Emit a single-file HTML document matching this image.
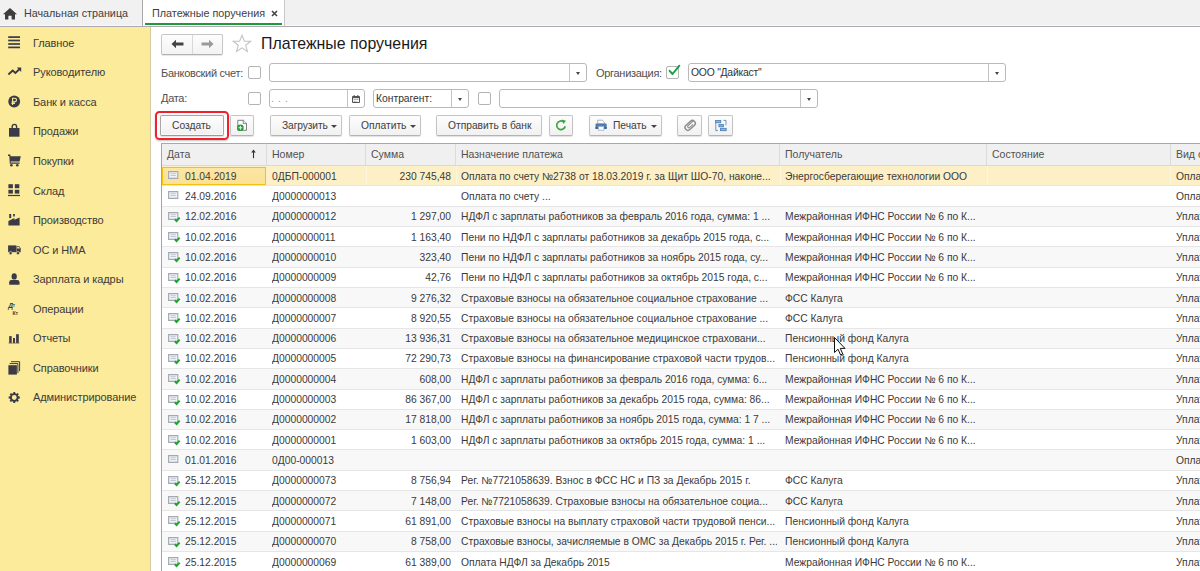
<!DOCTYPE html><html><head><meta charset="utf-8"><style>
*{margin:0;padding:0;box-sizing:border-box}
html,body{width:1200px;height:571px;overflow:hidden;background:#fff}
body{font-family:"Liberation Sans", sans-serif;position:relative;color:#333}
.a{position:absolute;white-space:nowrap}
#top{left:0;top:0;width:1200px;height:27px;background:#f1f1f1;border-bottom:1px solid #aea8b2;box-shadow:inset 0 -1px 0 #fafafa}
#side{left:0;top:27px;width:151px;height:544px;background:#fbeb9b;border-right:1px solid #d4cba2}
.sit{left:33px;font-size:11px;color:#3c3c3c;letter-spacing:-0.1px}
.lbl{font-size:11px;letter-spacing:-0.3px;color:#505050}
.cb{position:absolute;width:13px;height:13px;border:1px solid #b4b4b4;border-radius:2px;background:#fff}
.inp{position:absolute;border:1px solid #b9b9b9;border-radius:3px;background:#fff;height:19px}
.dd{position:absolute;top:0;right:0;width:17px;height:17px;border-left:1px solid #c4c4c4}
.dd:after{content:"";position:absolute;left:5.5px;top:8px;border-left:2.5px solid transparent;border-right:2.5px solid transparent;border-top:3px solid #444}
.btn{position:absolute;top:115px;height:21px;border:1px solid #c4c4c4;border-bottom-color:#b4b4b4;border-radius:2px;background:linear-gradient(#fdfdfd,#f1f1f1);box-shadow:0 1px 1px rgba(0,0,0,.12);font-size:10.25px;color:#404040;text-align:left;padding-left:11px;line-height:19px}
.caret{position:absolute;right:4.5px;top:9px;width:0;height:0;border-left:3px solid transparent;border-right:3px solid transparent;border-top:3px solid #444}
#grid{left:161px;top:143px;width:1039px;height:428px;border-left:1px solid #a4a4a4;border-top:1px solid #a8a8a8;overflow:hidden}
.hd{position:absolute;top:0;height:22px;background:#f0f0f0;border-bottom:1px solid #d6d9e0;border-right:1px solid #dcdcdc;font-size:10.5px;color:#505050;padding-left:5px;line-height:19px;padding-top:0.5px}
.row{position:absolute;left:0;width:1039px;height:20.32px;border-bottom:1px solid #e6e6e6}
.c{position:absolute;top:0.6px;font-size:10.3px;color:#3a3a3a;line-height:19px;white-space:nowrap;overflow:hidden}
</style></head><body><div id="top" class="a"></div><svg class="a" style="left:3px;top:8px" width="14" height="12" viewBox="0 0 14 12"><path d="M7 0 L14 6.2 L12 6.2 L12 11.5 L8.6 11.5 L8.6 7.8 L5.4 7.8 L5.4 11.5 L2 11.5 L2 6.2 L0 6.2 Z" fill="#3d3d3d"/></svg><div class="a" style="left:24px;top:7px;font-size:10.75px;color:#404040">Начальная страница</div><div class="a" style="left:142px;top:0;width:143px;height:26px;background:#fff;border-left:1px solid #a9a9a9;border-right:1px solid #c8c8c8"></div><div class="a" style="left:145px;top:23px;width:137px;height:2px;background:#1d9a3a"></div><div class="a" style="left:152px;top:7px;font-size:10.8px;color:#404040">Платежные поручения</div><svg class="a" style="left:271px;top:10px" width="7" height="7" viewBox="0 0 7 7"><path d="M1 1L6 6M6 1L1 6" stroke="#444" stroke-width="1.6"/></svg><div id="side" class="a"></div><svg class="a" style="left:0;top:0" width="30" height="420" viewBox="0 0 30 420"><g fill="#3b3b48">
<rect x="8.2" y="36.25" width="11.8" height="1.7"/><rect x="8.2" y="39.65" width="11.8" height="1.7"/><rect x="8.2" y="43.15" width="11.8" height="1.7"/><rect x="8.2" y="46.55" width="11.8" height="1.7"/>
<polyline points="8.4,74.5 12.7,70.5 15.4,72.9 19.4,69.2" fill="none" stroke="#3b3b48" stroke-width="1.9" stroke-linejoin="miter"/><path d="M16.8 67.6H21.2V72Z"/>
<circle cx="14.2" cy="101.5" r="5.9"/>
<path d="M9 128h10.5v8.7H9z"/><path d="M12.2 128.6V126.6a2.2 2.2 0 0 1 4.4 0V128.6" fill="none" stroke="#3b3b48" stroke-width="1.4"/>
<path d="M8 154.6h2.2l0.4 1.6H20.8l-1.2 5.4H10.6l0.2 1H19.6v1.2H9.8L9.3 155.9H8z"/><circle cx="11.4" cy="165.2" r="1.3"/><circle cx="17.3" cy="165.2" r="1.3"/>
<rect x="8.4" y="184.2" width="4.5" height="4"/><rect x="14.8" y="184.2" width="4.5" height="4"/><rect x="8.4" y="189.8" width="4.5" height="3.8"/><rect x="14.8" y="189.8" width="4.5" height="3.8"/><rect x="8" y="194.9" width="12" height="1.2"/>
<path d="M9.2 214h2v4.1h-2z"/><path d="M13.1 214h1.9l-0.4 2.4h-1.5z"/><path d="M8.4 225.6V221.1L14.4 218.1V219.8L19.6 217.6V225.6Z"/>
<path d="M8.1 245.4h8.3v6.8H8.1z"/><path d="M16.6 246.2h2.6l1.5 2v4H16.6z"/><path d="M17.2 247.1h1.8l1 1.5h-2.8z" fill="#fbeb9b"/><circle cx="10.6" cy="253.1" r="1.6" stroke="#fbeb9b" stroke-width="0.6"/><circle cx="18" cy="253.1" r="1.6" stroke="#fbeb9b" stroke-width="0.6"/>
<ellipse cx="14.2" cy="276.4" rx="2.6" ry="3.2"/><path d="M9.2 284.8V282.2Q9.2 280.1 11.4 280.1H17.2Q19.5 280.1 19.5 282.2V284.8Z"/>
<text x="8.2" y="308.4" font-family="Liberation Sans" font-size="6.6" font-weight="bold" font-style="italic">Д</text><text x="12.8" y="307.2" font-family="Liberation Sans" font-size="4.6" font-weight="bold">т</text><text x="12.4" y="314.6" font-family="Liberation Sans" font-size="5.2" font-weight="bold">Кт</text>
<rect x="9.2" y="336.1" width="2.5" height="6.8"/><rect x="13" y="338" width="2" height="4.9"/><rect x="16.1" y="334.2" width="2.7" height="8.7"/><rect x="8.6" y="342.6" width="10.8" height="1" opacity="0.6"/>
<rect x="8.4" y="365.2" width="8.5" height="9.4"/><path d="M9.6 363.6H17.9V373.2" fill="none" stroke="#3b3b48" stroke-width="1"/><path d="M11 361.7H19.6V371.2" fill="none" stroke="#3b3b48" stroke-width="1"/>
<g transform="translate(14.25 397.5)"><circle r="3.4" fill="none" stroke="#3b3b48" stroke-width="1.9"/><g id="t"><path d="M-0.9 -5.6H0.9L1.2 -3.2H-1.2Z"/><path d="M-0.9 5.6H0.9L1.2 3.2H-1.2Z"/><path d="M-5.6 -0.9V0.9L-3.2 1.2V-1.2Z"/><path d="M5.6 -0.9V0.9L3.2 1.2V-1.2Z"/></g><use href="#t" transform="rotate(45)"/></g>
</g>
<path d="M12.6 104.9V98.3h2.1a1.8 1.8 0 0 1 0 3.6h-3M11.5 103.4h3.4" stroke="#fbeb9b" stroke-width="1.1" fill="none"/>
</svg><div class="a sit" style="top:36.80px">Главное</div><div class="a sit" style="top:66.35px">Руководителю</div><div class="a sit" style="top:95.90px">Банк и касса</div><div class="a sit" style="top:125.45px">Продажи</div><div class="a sit" style="top:155.00px">Покупки</div><div class="a sit" style="top:184.55px">Склад</div><div class="a sit" style="top:214.10px">Производство</div><div class="a sit" style="top:243.65px">ОС и НМА</div><div class="a sit" style="top:273.20px">Зарплата и кадры</div><div class="a sit" style="top:302.75px">Операции</div><div class="a sit" style="top:332.30px">Отчеты</div><div class="a sit" style="top:361.85px">Справочники</div><div class="a sit" style="top:391.40px">Администрирование</div><div class="a" style="left:161px;top:34px;width:62px;height:21px;border:1px solid #c6c6c6;border-bottom-color:#b0b0b0;border-radius:2px;background:linear-gradient(#fdfdfd,#f3f3f3);box-shadow:0 1px 1px rgba(0,0,0,.1)"></div><div class="a" style="left:192px;top:35px;width:1px;height:19px;background:#d8d8d8"></div><svg class="a" style="left:171px;top:39px" width="13" height="10" viewBox="0 0 13 10"><path d="M0.5 5L5 0.8V3.6H12.5V6.4H5V9.2Z" fill="#444"/></svg><svg class="a" style="left:201px;top:39px" width="13" height="10" viewBox="0 0 13 10"><path d="M12.5 5L8 0.8V3.6H0.5V6.4H8V9.2Z" fill="#9a9a9a"/></svg><svg class="a" style="left:232px;top:34px" width="20" height="19" viewBox="0 0 20 19"><path d="M10 1.2L12.4 7.1L18.6 7.3L13.7 11.2L15.4 17.4L10 13.8L4.6 17.4L6.3 11.2L1.4 7.3L7.6 7.1Z" fill="none" stroke="#c4c4c4" stroke-width="1.1"/></svg><div class="a" style="left:261px;top:35px;font-size:15.9px;color:#1a1a1a">Платежные поручения</div><div class="a lbl" style="left:161px;top:66.5px">Банковский счет:</div><div class="cb" style="left:248px;top:66px"></div><div class="inp" style="left:269px;top:63px;width:318px"><div class="dd"></div></div><div class="a lbl" style="left:596px;top:66.5px">Организация:</div><div class="cb" style="left:666px;top:66px"></div><svg class="a" style="left:666px;top:62px" width="16" height="15" viewBox="0 0 16 15"><path d="M3.6 8.8L6.5 12L13.4 3.7" stroke="#14a03c" stroke-width="1.9" fill="none" stroke-linecap="round" stroke-linejoin="round"/></svg><div class="inp" style="left:688px;top:63px;width:318px"><div class="dd"></div><div class="a" style="left:2px;top:3px;font-size:10.4px;letter-spacing:-0.25px;color:#333">ООО "Дайкаст"</div></div><div class="a lbl" style="left:161px;top:92px">Дата:</div><div class="cb" style="left:248px;top:92px"></div><div class="inp" style="left:269px;top:89px;width:96px"><div class="a" style="left:1px;top:2px;font-size:10.5px;color:#999;letter-spacing:0.6px">. . .</div><div class="dd" style="width:17px"></div></div><svg class="a" style="left:352px;top:94.5px" width="8" height="8" viewBox="0 0 8 8"><path d="M0.5 1.5h7v6h-7z" fill="#fff" stroke="#555" stroke-width="1"/><path d="M0.5 2.5h7" stroke="#555" stroke-width="1.4"/><path d="M2.2 0v1.6M5.8 0v1.6" stroke="#555" stroke-width="1"/><g fill="#888"><rect x="1.7" y="4" width="1" height="1"/><rect x="3.5" y="4" width="1" height="1"/><rect x="5.3" y="4" width="1" height="1"/><rect x="1.7" y="5.8" width="1" height="1"/><rect x="3.5" y="5.8" width="1" height="1"/></g></svg><div class="inp" style="left:373px;top:89px;width:96px"><div class="a" style="left:2px;top:3px;font-size:10.3px;color:#333">Контрагент:</div><div class="dd"></div></div><div class="cb" style="left:478px;top:92px"></div><div class="inp" style="left:499px;top:89px;width:319px"><div class="dd"></div></div><div class="a" style="left:155px;top:111px;width:74px;height:29px;border:2.2px solid #f0212b;border-radius:4.5px;box-shadow:0 1px 2px rgba(0,0,0,.25)"></div><div class="btn" style="left:160px;width:64px;border-color:#a8a8a8;border-bottom-color:#9a9a9a;box-shadow:inset 0 0 0 1px #fafafa,0 1px 1px rgba(0,0,0,.12)">Создать</div><div class="btn" style="left:230px;width:24px"></div><svg class="a" style="left:230px;top:115px" width="25" height="21" viewBox="230 115 25 21"><path d="M237.8 120.3h5.6l3.1 3.1v6.9h-8.7z" fill="#fff" stroke="#707070" stroke-width="0.9"/><path d="M243.2 120.3v3.3h3.3" fill="#e8eef5" stroke="#707070" stroke-width="0.8"/><circle cx="240.4" cy="127.8" r="3.3" fill="#1f9a35"/><path d="M240.4 125.8v4M238.4 127.8h4" stroke="#d8f5d8" stroke-width="1.1"/></svg><div class="btn" style="left:270px;width:72px;letter-spacing:-0.12px">Загрузить<span class="caret"></span></div><div class="btn" style="left:349px;width:72px">Оплатить<span class="caret"></span></div><div class="btn" style="left:436px;width:106px">Отправить в банк</div><div class="btn" style="left:549px;width:24px"></div><svg class="a" style="left:549px;top:115px" width="25" height="21" viewBox="549 115 25 21"><path d="M565.2 126.2A4.3 4.3 0 1 1 563.2 121.6" fill="none" stroke="#3aa63e" stroke-width="1.7"/><path d="M561.8 119.6L566 120.8L563.4 124Z" fill="#3aa63e"/></svg><div class="btn" style="left:589px;width:73px;text-align:left;padding-left:23px">Печать<span class="caret"></span></div><svg class="a" style="left:589px;top:115px" width="25" height="21" viewBox="589 115 25 21"><path d="M597.7 120.2h4.6l2 2v1.8h-6.6z" fill="#fff" stroke="#9aa0a6" stroke-width="0.8"/><path d="M596.4 123.6h9.4a0.9 0.9 0 0 1 0.9 0.9v4.3h-11.2v-4.3a0.9 0.9 0 0 1 0.9-0.9z" fill="#4d7db0"/><path d="M595.5 127.2h11.2v1.6h-11.2z" fill="#2f5d8e"/><path d="M598.3 126.4h5.6v3.9h-5.6z" fill="#fff" stroke="#8da6c0" stroke-width="0.7"/></svg><div class="btn" style="left:677px;width:25px"></div><svg class="a" style="left:677px;top:115px" width="25" height="21" viewBox="677 115 25 21"><g transform="rotate(-42 690 125.5)" fill="none" stroke="#8c8c8c"><rect x="684.3" y="122.6" width="11.8" height="5.8" rx="2.9" stroke-width="1.4"/><path d="M696 124.2H688.6a1.3 1.3 0 0 0 0 2.6H693" stroke-width="1.1"/></g></svg><div class="btn" style="left:708px;width:25px"></div><svg class="a" style="left:708px;top:115px" width="25" height="21" viewBox="708 115 25 21"><g fill="#86b0dc" stroke="#4a7fb6" stroke-width="0.8"><rect x="715.6" y="120.4" width="5.2" height="2.4"/><rect x="718.9" y="124.4" width="4.5" height="2.4"/><rect x="720.5" y="128.3" width="5.7" height="2.4"/></g><path d="M715.8 122.8v7.8h2.2M723.4 120.4h2.6v5" fill="none" stroke="#5a8cc0" stroke-width="0.9"/></svg><div id="grid" class="a"><div class="hd" style="left:0px;width:105px">Дата</div><div class="hd" style="left:105px;width:99px">Номер</div><div class="hd" style="left:204px;width:90px">Сумма</div><div class="hd" style="left:294px;width:324px">Назначение платежа</div><div class="hd" style="left:618px;width:207px">Получатель</div><div class="hd" style="left:825px;width:184px">Состояние</div><div class="hd" style="left:1009px;width:191px">Вид операции</div><svg class="a" style="left:88px;top:5px" width="7" height="10" viewBox="0 0 7 10"><path d="M3.5 2.5V9.2" stroke="#333" stroke-width="1.1"/><path d="M1.2 3.6L3.5 0.6L5.8 3.6Z" fill="#333"/></svg><div class="row" style="top:22.00px;background:#fdf0c6"><div class="a" style="left:0;top:1px;width:104px;height:17.5px;background:linear-gradient(#fce6a4,#fbe196);border:1px solid #f3c20e"></div><div class="a" style="left:204px;top:0;width:1px;height:19px;background:#fdf6de"></div><div class="a" style="left:294px;top:0;width:1px;height:19px;background:#fdf6de"></div><div class="a" style="left:618px;top:0;width:1px;height:19px;background:#fdf6de"></div><div class="a" style="left:825px;top:0;width:1px;height:19px;background:#fdf6de"></div><div class="a" style="left:1008px;top:0;width:1px;height:19px;background:#fdf6de"></div><svg class="a" style="left:5.5px;top:5px" width="14" height="13" viewBox="0 0 14 13"><path d="M0.6 0.6h9.2v6.8h-9.2z" fill="#eef1f6" stroke="#a4a8b0" stroke-width="1.1"/><path d="M2.6 2.7h5.2M2.6 4.5h5.2" stroke="#bcc3cf" stroke-width="0.9"/></svg><div class="c" style="left:23px;width:80px">01.04.2019</div><div class="c" style="left:110px;width:92px">0ДБП-000001</div><div class="c" style="left:204px;width:85px;text-align:right">230 745,48</div><div class="c" style="left:299px;width:316px">Оплата по счету №2738 от 18.03.2019 г. за Щит ШО-70, наконе...</div><div class="c" style="left:623px;width:200px">Энергосберегающие технологии ООО</div><div class="c" style="left:1014px;width:200px">Оплата поставщику</div></div><div class="row" style="top:42.32px;background:#fff"><svg class="a" style="left:5.5px;top:5px" width="14" height="13" viewBox="0 0 14 13"><path d="M0.6 0.6h9.2v6.8h-9.2z" fill="#eef1f6" stroke="#a4a8b0" stroke-width="1.1"/><path d="M2.6 2.7h5.2M2.6 4.5h5.2" stroke="#bcc3cf" stroke-width="0.9"/></svg><div class="c" style="left:23px;width:80px">24.09.2016</div><div class="c" style="left:110px;width:92px">Д0000000013</div><div class="c" style="left:204px;width:85px;text-align:right"></div><div class="c" style="left:299px;width:316px">Оплата по счету ...</div><div class="c" style="left:623px;width:200px"></div><div class="c" style="left:1014px;width:200px">Оплата поставщику</div></div><div class="row" style="top:62.64px;background:#f8f8f8"><svg class="a" style="left:5.5px;top:5px" width="14" height="13" viewBox="0 0 14 13"><path d="M0.6 0.6h9.2v6.8h-9.2z" fill="#eef1f6" stroke="#a4a8b0" stroke-width="1.1"/><path d="M2.6 2.7h5.2M2.6 4.5h5.2" stroke="#bcc3cf" stroke-width="0.9"/><path d="M6.8 7.2L8.6 9L11.6 5.6" stroke="#22a32f" stroke-width="2" fill="none"/></svg><div class="c" style="left:23px;width:80px">12.02.2016</div><div class="c" style="left:110px;width:92px">Д0000000012</div><div class="c" style="left:204px;width:85px;text-align:right">1 297,00</div><div class="c" style="left:299px;width:316px">НДФЛ с зарплаты работников за февраль 2016 года, сумма: 1 ...</div><div class="c" style="left:623px;width:200px">Межрайонная ИФНС России № 6 по К...</div><div class="c" style="left:1014px;width:200px">Уплата налога</div></div><div class="row" style="top:82.96px;background:#fff"><svg class="a" style="left:5.5px;top:5px" width="14" height="13" viewBox="0 0 14 13"><path d="M0.6 0.6h9.2v6.8h-9.2z" fill="#eef1f6" stroke="#a4a8b0" stroke-width="1.1"/><path d="M2.6 2.7h5.2M2.6 4.5h5.2" stroke="#bcc3cf" stroke-width="0.9"/><path d="M6.8 7.2L8.6 9L11.6 5.6" stroke="#22a32f" stroke-width="2" fill="none"/></svg><div class="c" style="left:23px;width:80px">10.02.2016</div><div class="c" style="left:110px;width:92px">Д0000000011</div><div class="c" style="left:204px;width:85px;text-align:right">1 163,40</div><div class="c" style="left:299px;width:316px">Пени по НДФЛ с зарплаты работников за декабрь 2015 года, с...</div><div class="c" style="left:623px;width:200px">Межрайонная ИФНС России № 6 по К...</div><div class="c" style="left:1014px;width:200px">Уплата налога</div></div><div class="row" style="top:103.28px;background:#f8f8f8"><svg class="a" style="left:5.5px;top:5px" width="14" height="13" viewBox="0 0 14 13"><path d="M0.6 0.6h9.2v6.8h-9.2z" fill="#eef1f6" stroke="#a4a8b0" stroke-width="1.1"/><path d="M2.6 2.7h5.2M2.6 4.5h5.2" stroke="#bcc3cf" stroke-width="0.9"/><path d="M6.8 7.2L8.6 9L11.6 5.6" stroke="#22a32f" stroke-width="2" fill="none"/></svg><div class="c" style="left:23px;width:80px">10.02.2016</div><div class="c" style="left:110px;width:92px">Д0000000010</div><div class="c" style="left:204px;width:85px;text-align:right">323,40</div><div class="c" style="left:299px;width:316px">Пени по НДФЛ с зарплаты работников за ноябрь 2015 года, су...</div><div class="c" style="left:623px;width:200px">Межрайонная ИФНС России № 6 по К...</div><div class="c" style="left:1014px;width:200px">Уплата налога</div></div><div class="row" style="top:123.60px;background:#fff"><svg class="a" style="left:5.5px;top:5px" width="14" height="13" viewBox="0 0 14 13"><path d="M0.6 0.6h9.2v6.8h-9.2z" fill="#eef1f6" stroke="#a4a8b0" stroke-width="1.1"/><path d="M2.6 2.7h5.2M2.6 4.5h5.2" stroke="#bcc3cf" stroke-width="0.9"/><path d="M6.8 7.2L8.6 9L11.6 5.6" stroke="#22a32f" stroke-width="2" fill="none"/></svg><div class="c" style="left:23px;width:80px">10.02.2016</div><div class="c" style="left:110px;width:92px">Д0000000009</div><div class="c" style="left:204px;width:85px;text-align:right">42,76</div><div class="c" style="left:299px;width:316px">Пени по НДФЛ с зарплаты работников за октябрь 2015 года, с...</div><div class="c" style="left:623px;width:200px">Межрайонная ИФНС России № 6 по К...</div><div class="c" style="left:1014px;width:200px">Уплата налога</div></div><div class="row" style="top:143.92px;background:#f8f8f8"><svg class="a" style="left:5.5px;top:5px" width="14" height="13" viewBox="0 0 14 13"><path d="M0.6 0.6h9.2v6.8h-9.2z" fill="#eef1f6" stroke="#a4a8b0" stroke-width="1.1"/><path d="M2.6 2.7h5.2M2.6 4.5h5.2" stroke="#bcc3cf" stroke-width="0.9"/><path d="M6.8 7.2L8.6 9L11.6 5.6" stroke="#22a32f" stroke-width="2" fill="none"/></svg><div class="c" style="left:23px;width:80px">10.02.2016</div><div class="c" style="left:110px;width:92px">Д0000000008</div><div class="c" style="left:204px;width:85px;text-align:right">9 276,32</div><div class="c" style="left:299px;width:316px">Страховые взносы на обязательное социальное страхование ...</div><div class="c" style="left:623px;width:200px">ФСС Калуга</div><div class="c" style="left:1014px;width:200px">Уплата налога</div></div><div class="row" style="top:164.24px;background:#fff"><svg class="a" style="left:5.5px;top:5px" width="14" height="13" viewBox="0 0 14 13"><path d="M0.6 0.6h9.2v6.8h-9.2z" fill="#eef1f6" stroke="#a4a8b0" stroke-width="1.1"/><path d="M2.6 2.7h5.2M2.6 4.5h5.2" stroke="#bcc3cf" stroke-width="0.9"/><path d="M6.8 7.2L8.6 9L11.6 5.6" stroke="#22a32f" stroke-width="2" fill="none"/></svg><div class="c" style="left:23px;width:80px">10.02.2016</div><div class="c" style="left:110px;width:92px">Д0000000007</div><div class="c" style="left:204px;width:85px;text-align:right">8 920,55</div><div class="c" style="left:299px;width:316px">Страховые взносы на обязательное социальное страхование ...</div><div class="c" style="left:623px;width:200px">ФСС Калуга</div><div class="c" style="left:1014px;width:200px">Уплата налога</div></div><div class="row" style="top:184.56px;background:#f8f8f8"><svg class="a" style="left:5.5px;top:5px" width="14" height="13" viewBox="0 0 14 13"><path d="M0.6 0.6h9.2v6.8h-9.2z" fill="#eef1f6" stroke="#a4a8b0" stroke-width="1.1"/><path d="M2.6 2.7h5.2M2.6 4.5h5.2" stroke="#bcc3cf" stroke-width="0.9"/><path d="M6.8 7.2L8.6 9L11.6 5.6" stroke="#22a32f" stroke-width="2" fill="none"/></svg><div class="c" style="left:23px;width:80px">10.02.2016</div><div class="c" style="left:110px;width:92px">Д0000000006</div><div class="c" style="left:204px;width:85px;text-align:right">13 936,31</div><div class="c" style="left:299px;width:316px">Страховые взносы на обязательное медицинское страховани...</div><div class="c" style="left:623px;width:200px">Пенсионный фонд Калуга</div><div class="c" style="left:1014px;width:200px">Уплата налога</div></div><div class="row" style="top:204.88px;background:#fff"><svg class="a" style="left:5.5px;top:5px" width="14" height="13" viewBox="0 0 14 13"><path d="M0.6 0.6h9.2v6.8h-9.2z" fill="#eef1f6" stroke="#a4a8b0" stroke-width="1.1"/><path d="M2.6 2.7h5.2M2.6 4.5h5.2" stroke="#bcc3cf" stroke-width="0.9"/><path d="M6.8 7.2L8.6 9L11.6 5.6" stroke="#22a32f" stroke-width="2" fill="none"/></svg><div class="c" style="left:23px;width:80px">10.02.2016</div><div class="c" style="left:110px;width:92px">Д0000000005</div><div class="c" style="left:204px;width:85px;text-align:right">72 290,73</div><div class="c" style="left:299px;width:316px">Страховые взносы на финансирование страховой части трудов...</div><div class="c" style="left:623px;width:200px">Пенсионный фонд Калуга</div><div class="c" style="left:1014px;width:200px">Уплата налога</div></div><div class="row" style="top:225.20px;background:#f8f8f8"><svg class="a" style="left:5.5px;top:5px" width="14" height="13" viewBox="0 0 14 13"><path d="M0.6 0.6h9.2v6.8h-9.2z" fill="#eef1f6" stroke="#a4a8b0" stroke-width="1.1"/><path d="M2.6 2.7h5.2M2.6 4.5h5.2" stroke="#bcc3cf" stroke-width="0.9"/><path d="M6.8 7.2L8.6 9L11.6 5.6" stroke="#22a32f" stroke-width="2" fill="none"/></svg><div class="c" style="left:23px;width:80px">10.02.2016</div><div class="c" style="left:110px;width:92px">Д0000000004</div><div class="c" style="left:204px;width:85px;text-align:right">608,00</div><div class="c" style="left:299px;width:316px">НДФЛ с зарплаты работников за февраль 2016 года, сумма: 6...</div><div class="c" style="left:623px;width:200px">Межрайонная ИФНС России № 6 по К...</div><div class="c" style="left:1014px;width:200px">Уплата налога</div></div><div class="row" style="top:245.52px;background:#fff"><svg class="a" style="left:5.5px;top:5px" width="14" height="13" viewBox="0 0 14 13"><path d="M0.6 0.6h9.2v6.8h-9.2z" fill="#eef1f6" stroke="#a4a8b0" stroke-width="1.1"/><path d="M2.6 2.7h5.2M2.6 4.5h5.2" stroke="#bcc3cf" stroke-width="0.9"/><path d="M6.8 7.2L8.6 9L11.6 5.6" stroke="#22a32f" stroke-width="2" fill="none"/></svg><div class="c" style="left:23px;width:80px">10.02.2016</div><div class="c" style="left:110px;width:92px">Д0000000003</div><div class="c" style="left:204px;width:85px;text-align:right">86 367,00</div><div class="c" style="left:299px;width:316px">НДФЛ с зарплаты работников за декабрь 2015 года, сумма: 86...</div><div class="c" style="left:623px;width:200px">Межрайонная ИФНС России № 6 по К...</div><div class="c" style="left:1014px;width:200px">Уплата налога</div></div><div class="row" style="top:265.84px;background:#f8f8f8"><svg class="a" style="left:5.5px;top:5px" width="14" height="13" viewBox="0 0 14 13"><path d="M0.6 0.6h9.2v6.8h-9.2z" fill="#eef1f6" stroke="#a4a8b0" stroke-width="1.1"/><path d="M2.6 2.7h5.2M2.6 4.5h5.2" stroke="#bcc3cf" stroke-width="0.9"/><path d="M6.8 7.2L8.6 9L11.6 5.6" stroke="#22a32f" stroke-width="2" fill="none"/></svg><div class="c" style="left:23px;width:80px">10.02.2016</div><div class="c" style="left:110px;width:92px">Д0000000002</div><div class="c" style="left:204px;width:85px;text-align:right">17 818,00</div><div class="c" style="left:299px;width:316px">НДФЛ с зарплаты работников за ноябрь 2015 года, сумма: 1 7 ...</div><div class="c" style="left:623px;width:200px">Межрайонная ИФНС России № 6 по К...</div><div class="c" style="left:1014px;width:200px">Уплата налога</div></div><div class="row" style="top:286.16px;background:#fff"><svg class="a" style="left:5.5px;top:5px" width="14" height="13" viewBox="0 0 14 13"><path d="M0.6 0.6h9.2v6.8h-9.2z" fill="#eef1f6" stroke="#a4a8b0" stroke-width="1.1"/><path d="M2.6 2.7h5.2M2.6 4.5h5.2" stroke="#bcc3cf" stroke-width="0.9"/><path d="M6.8 7.2L8.6 9L11.6 5.6" stroke="#22a32f" stroke-width="2" fill="none"/></svg><div class="c" style="left:23px;width:80px">10.02.2016</div><div class="c" style="left:110px;width:92px">Д0000000001</div><div class="c" style="left:204px;width:85px;text-align:right">1 603,00</div><div class="c" style="left:299px;width:316px">НДФЛ с зарплаты работников за октябрь 2015 года, сумма: 1 ...</div><div class="c" style="left:623px;width:200px">Межрайонная ИФНС России № 6 по К...</div><div class="c" style="left:1014px;width:200px">Уплата налога</div></div><div class="row" style="top:306.48px;background:#f8f8f8"><svg class="a" style="left:5.5px;top:5px" width="14" height="13" viewBox="0 0 14 13"><path d="M0.6 0.6h9.2v6.8h-9.2z" fill="#eef1f6" stroke="#a4a8b0" stroke-width="1.1"/><path d="M2.6 2.7h5.2M2.6 4.5h5.2" stroke="#bcc3cf" stroke-width="0.9"/></svg><div class="c" style="left:23px;width:80px">01.01.2016</div><div class="c" style="left:110px;width:92px">0Д00-000013</div><div class="c" style="left:204px;width:85px;text-align:right"></div><div class="c" style="left:299px;width:316px"></div><div class="c" style="left:623px;width:200px"></div><div class="c" style="left:1014px;width:200px">Оплата поставщику</div></div><div class="row" style="top:326.80px;background:#fff"><svg class="a" style="left:5.5px;top:5px" width="14" height="13" viewBox="0 0 14 13"><path d="M0.6 0.6h9.2v6.8h-9.2z" fill="#eef1f6" stroke="#a4a8b0" stroke-width="1.1"/><path d="M2.6 2.7h5.2M2.6 4.5h5.2" stroke="#bcc3cf" stroke-width="0.9"/><path d="M6.8 7.2L8.6 9L11.6 5.6" stroke="#22a32f" stroke-width="2" fill="none"/></svg><div class="c" style="left:23px;width:80px">25.12.2015</div><div class="c" style="left:110px;width:92px">Д0000000073</div><div class="c" style="left:204px;width:85px;text-align:right">8 756,94</div><div class="c" style="left:299px;width:316px">Рег. №7721058639. Взнос в ФСС НС и ПЗ за Декабрь 2015 г.</div><div class="c" style="left:623px;width:200px">ФСС Калуга</div><div class="c" style="left:1014px;width:200px">Уплата налога</div></div><div class="row" style="top:347.12px;background:#f8f8f8"><svg class="a" style="left:5.5px;top:5px" width="14" height="13" viewBox="0 0 14 13"><path d="M0.6 0.6h9.2v6.8h-9.2z" fill="#eef1f6" stroke="#a4a8b0" stroke-width="1.1"/><path d="M2.6 2.7h5.2M2.6 4.5h5.2" stroke="#bcc3cf" stroke-width="0.9"/><path d="M6.8 7.2L8.6 9L11.6 5.6" stroke="#22a32f" stroke-width="2" fill="none"/></svg><div class="c" style="left:23px;width:80px">25.12.2015</div><div class="c" style="left:110px;width:92px">Д0000000072</div><div class="c" style="left:204px;width:85px;text-align:right">7 148,00</div><div class="c" style="left:299px;width:316px">Рег. №7721058639. Страховые взносы на обязательное социа...</div><div class="c" style="left:623px;width:200px">ФСС Калуга</div><div class="c" style="left:1014px;width:200px">Уплата налога</div></div><div class="row" style="top:367.44px;background:#fff"><svg class="a" style="left:5.5px;top:5px" width="14" height="13" viewBox="0 0 14 13"><path d="M0.6 0.6h9.2v6.8h-9.2z" fill="#eef1f6" stroke="#a4a8b0" stroke-width="1.1"/><path d="M2.6 2.7h5.2M2.6 4.5h5.2" stroke="#bcc3cf" stroke-width="0.9"/><path d="M6.8 7.2L8.6 9L11.6 5.6" stroke="#22a32f" stroke-width="2" fill="none"/></svg><div class="c" style="left:23px;width:80px">25.12.2015</div><div class="c" style="left:110px;width:92px">Д0000000071</div><div class="c" style="left:204px;width:85px;text-align:right">61 891,00</div><div class="c" style="left:299px;width:316px">Страховые взносы на выплату страховой части трудовой пенси...</div><div class="c" style="left:623px;width:200px">Пенсионный фонд Калуга</div><div class="c" style="left:1014px;width:200px">Уплата налога</div></div><div class="row" style="top:387.76px;background:#f8f8f8"><svg class="a" style="left:5.5px;top:5px" width="14" height="13" viewBox="0 0 14 13"><path d="M0.6 0.6h9.2v6.8h-9.2z" fill="#eef1f6" stroke="#a4a8b0" stroke-width="1.1"/><path d="M2.6 2.7h5.2M2.6 4.5h5.2" stroke="#bcc3cf" stroke-width="0.9"/><path d="M6.8 7.2L8.6 9L11.6 5.6" stroke="#22a32f" stroke-width="2" fill="none"/></svg><div class="c" style="left:23px;width:80px">25.12.2015</div><div class="c" style="left:110px;width:92px">Д0000000070</div><div class="c" style="left:204px;width:85px;text-align:right">8 758,00</div><div class="c" style="left:299px;width:316px">Страховые взносы, зачисляемые в ОМС за Декабрь 2015 г. Рег. ...</div><div class="c" style="left:623px;width:200px">Пенсионный фонд Калуга</div><div class="c" style="left:1014px;width:200px">Уплата налога</div></div><div class="row" style="top:408.08px;background:#fff"><svg class="a" style="left:5.5px;top:5px" width="14" height="13" viewBox="0 0 14 13"><path d="M0.6 0.6h9.2v6.8h-9.2z" fill="#eef1f6" stroke="#a4a8b0" stroke-width="1.1"/><path d="M2.6 2.7h5.2M2.6 4.5h5.2" stroke="#bcc3cf" stroke-width="0.9"/><path d="M6.8 7.2L8.6 9L11.6 5.6" stroke="#22a32f" stroke-width="2" fill="none"/></svg><div class="c" style="left:23px;width:80px">25.12.2015</div><div class="c" style="left:110px;width:92px">Д0000000069</div><div class="c" style="left:204px;width:85px;text-align:right">61 389,00</div><div class="c" style="left:299px;width:316px">Оплата НДФЛ за Декабрь 2015</div><div class="c" style="left:623px;width:200px">Межрайонная ИФНС России № 6 по К...</div><div class="c" style="left:1014px;width:200px">Уплата налога</div></div></div><svg class="a" style="left:834px;top:337px" width="12" height="19" viewBox="0 0 12 19"><path d="M0.5 0.5V15.5L4 12.2L6.6 18L8.8 17L6.3 11.4H11Z" fill="#fff" stroke="#111" stroke-width="1"/></svg></body></html>
